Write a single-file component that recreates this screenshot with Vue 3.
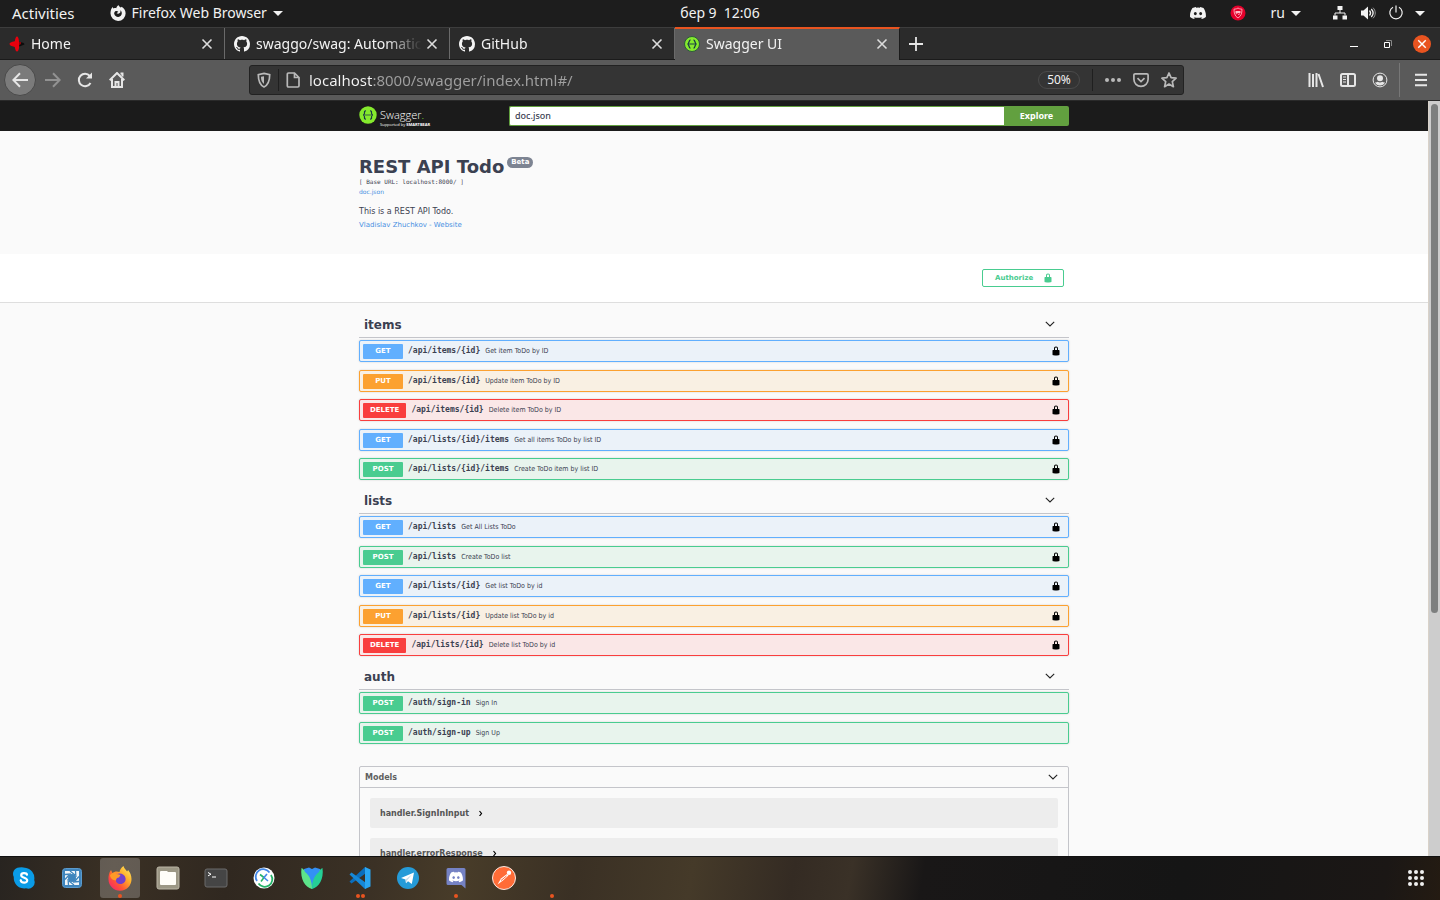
<script setup>
import { ref } from 'vue'

const tabs = [
  { title: 'Home', icon: 'home' },
  { title: 'swaggo/swag: Automatic', icon: 'github' },
  { title: 'GitHub', icon: 'github' },
  { title: 'Swagger UI', icon: 'swagger', active: true },
]

const spec = ref('doc.json')
const address = ref('localhost:8000/swagger/index.html#/')

const sections = [
  {
    name: 'items',
    ops: [
      { method: 'GET', path: '/api/items/{id}', summary: 'Get item ToDo by ID', lock: true },
      { method: 'PUT', path: '/api/items/{id}', summary: 'Update item ToDo by ID', lock: true },
      { method: 'DELETE', path: '/api/items/{id}', summary: 'Delete item ToDo by ID', lock: true },
      { method: 'GET', path: '/api/lists/{id}/items', summary: 'Get all items ToDo by list ID', lock: true },
      { method: 'POST', path: '/api/lists/{id}/items', summary: 'Create ToDo item by list ID', lock: true },
    ],
  },
  {
    name: 'lists',
    ops: [
      { method: 'GET', path: '/api/lists', summary: 'Get All Lists ToDo', lock: true },
      { method: 'POST', path: '/api/lists', summary: 'Create ToDo list', lock: true },
      { method: 'GET', path: '/api/lists/{id}', summary: 'Get list ToDo by id', lock: true },
      { method: 'PUT', path: '/api/lists/{id}', summary: 'Update list ToDo by id', lock: true },
      { method: 'DELETE', path: '/api/lists/{id}', summary: 'Delete list ToDo by id', lock: true },
    ],
  },
  {
    name: 'auth',
    ops: [
      { method: 'POST', path: '/auth/sign-in', summary: 'Sign In' },
      { method: 'POST', path: '/auth/sign-up', summary: 'Sign Up' },
    ],
  },
]

const models = ['handler.SignInInput', 'handler.errorResponse']

const dock = [
  { id: 'skype', label: 'Skype', dots: 0 },
  { id: 'shutter', label: 'Screenshot', dots: 0 },
  { id: 'firefox', label: 'Firefox', dots: 1, active: true },
  { id: 'files', label: 'Files', dots: 0 },
  { id: 'terminal', label: 'Terminal', dots: 0 },
  { id: 'remote', label: 'Remote desktop', dots: 0 },
  { id: 'tulip', label: 'Tulip', dots: 0 },
  { id: 'code', label: 'Code', dots: 2 },
  { id: 'telegram', label: 'Telegram', dots: 0 },
  { id: 'discord', label: 'Discord', dots: 1 },
  { id: 'postman', label: 'Postman', dots: 0 },
  { id: 'blank', label: 'Window', dots: 1 },
]
</script>

<template>
  <div class="desktop">
    <svg class="defs" aria-hidden="true">
      <symbol id="lock" viewBox="0 0 20 20">
        <path d="M15.8 8H14V5.6C14 2.7 12.7 1 10 1 7.200 1 6 2.700 6 5.600V8H4c-.55 0-1 .65-1 1.200V17c0 .55.47 1.170 1 1.340l1.200.36c.52.17 1.370.3 1.920.3h5.760c.55 0 1.400-.13 1.920-.31l1.190-.36c.53-.16 1-.78 1-1.330V9.200c0-.55-.64-1.200-1.190-1.200zM12 8H8V5.200C8 3.700 8.700 3 10 3s2 .7 2 2.200V8z" />
      </symbol>
      <symbol id="github" viewBox="0 0 16 16">
        <path d="M8 0C3.580 0 0 3.580 0 8c0 3.540 2.290 6.530 5.470 7.590.4.070.55-.17.55-.38 0-.19-.01-.82-.01-1.490-2.010.37-2.530-.49-2.690-.94-.09-.23-.48-.94-.82-1.130-.28-.15-.68-.52-.01-.53.63-.01 1.080.58 1.230.82.72 1.210 1.870.87 2.330.66.070-.52.28-.87.51-1.070-1.780-.2-3.640-.89-3.640-3.950 0-.87.31-1.590.82-2.150-.08-.2-.36-1.020.08-2.120 0 0 .67-.21 2.200.82.64-.18 1.320-.27 2-.27s1.360.09 2 .27c1.530-1.040 2.200-.82 2.200-.82.44 1.100.16 1.920.08 2.120.51.56.82 1.270.82 2.150 0 3.070-1.870 3.750-3.650 3.950.29.25.54.73.54 1.480 0 1.070-.01 1.930-.01 2.200 0 .21.15.46.55.38A8.010 8.010 0 0 0 16 8c0-4.420-3.580-8-8-8z" />
      </symbol>
      <symbol id="discordface" viewBox="0 0 24 24">
        <path d="M20.300 4.400A19.800 19.800 0 0 0 15.400 2.900l-.6 1.200a18.300 18.300 0 0 0-5.500 0L8.600 2.900a19.700 19.700 0 0 0-4.900 1.500C.5 9-.3 13.600.1 18.100a19.900 19.900 0 0 0 6 3l1.300-2-1.900-.9.400-.3c3.900 1.800 8.200 1.800 12.100 0l.4.300-1.900.9 1.300 2a19.800 19.800 0 0 0 6-3c.5-5.200-.8-9.700-3.500-13.700zM8 15.300c-1.200 0-2.200-1.100-2.200-2.400s1-2.400 2.200-2.400 2.200 1.100 2.200 2.400-1 2.400-2.200 2.400zm8 0c-1.200 0-2.200-1.100-2.200-2.400s1-2.400 2.200-2.400 2.200 1.100 2.200 2.400-1 2.400-2.200 2.400z" />
      </symbol>
      <symbol id="close" viewBox="0 0 12 12">
        <path d="M1.500 1.500l9 9M10.500 1.500l-9 9" fill="none" stroke="currentColor" stroke-width="1.600" />
      </symbol>
      <symbol id="chevron" viewBox="0 0 10 10">
        <path d="M.8 2.800L5 7l4.200-4.200" fill="none" stroke="currentColor" stroke-width="1.100" />
      </symbol>
      <symbol id="swag" viewBox="0 0 18 18">
        <circle cx="9" cy="9" r="8.700" fill="#85ea2d" />
        <path d="M7 4.800c-1.800 0-1.500 1-1.500 2.200S5.200 9 4 9c1.200 0 1.500.8 1.500 2s-.3 2.200 1.500 2.200M11 4.800c1.800 0 1.500 1 1.500 2.200s.3 2 1.500 2c-1.200 0-1.500.8-1.500 2s.3 2.200-1.500 2.200" fill="none" stroke="#173647" stroke-width="1.200" />
        <circle cx="7" cy="9" r=".7" fill="#173647" /><circle cx="9" cy="9" r=".7" fill="#173647" /><circle cx="11" cy="9" r=".7" fill="#173647" />
      </symbol>
    </svg>

    <header class="panel">
      <div class="panel-left">
        <button class="activities">Activities</button>
        <button class="appmenu">
          <svg width="16" height="16" viewBox="0 0 16 16" fill="#f2f2f2">
            <path fill-rule="evenodd" d="M8.500 0c.3 1.400 1.500 2 2.500 2.600l.6-.9c2.500 1.500 4 3.800 4 6.600A7.500 7.500 0 0 1 .5 8.500C.4 6 1 3.800 2.700 1.900c.2.700.5 1.200 1 1.500.8-.4 1.700-.4 2.600-.2C6.500 2 7.400.8 8.500 0zM5.200 6.300C4.300 7 4 8 4.300 9.100c.5 1.900 2.200 3 4.100 2.800 2-.2 3.400-1.800 3.400-3.700 0-1.300-.6-2.300-1.500-2.900.4 1.300.1 2.200-.6 2.800-.8.700-2.200.8-3.100.1l1.700-1.500c-.8-.8-1.900-.9-3.100-.4z" />
          </svg>
          <span>Firefox Web Browser</span><i class="caret"></i>
        </button>
      </div>
      <time class="clock">бер 9&nbsp; 12:06</time>
      <div class="panel-right">
        <svg class="tray-discord" width="16" height="16" fill="#f2f2f2"><use href="#discordface" /></svg>
        <svg class="tray-shield" width="16" height="16" viewBox="0 0 16 16"><circle cx="8" cy="8" r="7.500" fill="#e4002b" /><path d="M4 4.200c1.600 0 3-.4 4-1.200 1 .8 2.400 1.200 4 1.200 0 4-.8 6.800-4 8.800-3.200-2-4-4.800-4-8.800z" fill="none" stroke="#ff9cac" /><path d="M5.500 6h5v2h-5z" fill="#ffbac5" /><path d="M5.500 9l2-.7M8 9.500l2-.7" stroke="#ff9cac" /></svg>
        <button class="lang">ru<i class="caret"></i></button>
        <button class="system" aria-label="System menu">
          <svg width="16" height="16" viewBox="0 0 16 16" fill="#f2f2f2"><path d="M5.500 1h5v4h-5zM1 10.500h4.500v4H1zM10.500 10.500H15v4h-4.500z" /><path d="M8 5v3M3 10.500V8h10v2.500" fill="none" stroke="#f2f2f2" /></svg>
          <svg width="16" height="16" viewBox="0 0 16 16"><path d="M1 5.500h2.500L8 1.500v13l-4.500-4H1z" fill="#f2f2f2" /><path d="M9.500 5.500c1.300 1.500 1.300 3.500 0 5M11.300 4c2.200 2.400 2.200 5.600 0 8" fill="none" stroke="#f2f2f2" stroke-width="1.300" /><path d="M13 2.700c3 3 3 7.600 0 10.600" fill="none" stroke="#999" /></svg>
          <svg width="16" height="16" viewBox="0 0 16 16" fill="none" stroke="#f2f2f2" stroke-width="1.200"><path d="M5 2.300a6.200 6.200 0 1 0 6 0M8 .5v7" /></svg>
          <i class="caret"></i>
        </button>
      </div>
    </header>

    <div class="tabbar">
      <div v-for="t in tabs" :key="t.title" class="tab" :class="{ active: t.active }">
        <svg v-if="t.icon === 'home'" width="16" height="16" viewBox="0 0 16 16"><path d="M8.500 5.500L14 6.800q1.500.4 1.500 1.700L9 11z" fill="#0c0c0c" /><path d="M9 6h3v2l-3 2z" fill="#8d0008" /><path d="M8 .5q1.500 0 2 5L10 8l.2 3q-.7 4.500-2.200 4.500T5.800 11Q.5 9.800.5 8t5.300-2.700Q6.500.5 8 .5z" fill="#e8000d" /></svg>
        <svg v-else-if="t.icon === 'github'" width="16" height="16" fill="#f4f4f4"><use href="#github" /></svg>
        <svg v-else width="16" height="16" viewBox="0 0 16 16"><circle cx="8" cy="8" r="7.500" fill="#85ea2d" stroke="#2c5a3c" /><path d="M6.500 3.800C4.500 3.800 5.500 8 3.500 8c2 0 1 4.200 3 4.200M9.500 3.800c2 0 1 4.200 3 4.200-2 0-1 4.200-3 4.200" fill="none" stroke="#173647" stroke-width="1.300" /><path d="M5 8h6" stroke="#3d7a3c" stroke-width="1.500" /></svg>
        <button class="tab-title">{{ t.title }}</button>
        <button class="tab-close" aria-label="Close tab"><svg width="12" height="12"><use href="#close" /></svg></button>
      </div>
      <button class="newtab" aria-label="New tab"><svg width="14" height="14" viewBox="0 0 14 14"><path d="M7 0v14M0 7h14" stroke="#e6e6e6" stroke-width="1.800" /></svg></button>
      <div class="winctl">
        <button aria-label="Minimize"><svg width="8" height="10" viewBox="0 0 8 10"><path d="M0 7.500h8" stroke="#fff" /></svg></button>
        <button aria-label="Restore"><svg width="8" height="8" viewBox="0 0 8 8" fill="none"><path d="M.5 2.500h5v5h-5z" stroke="#fff" /><path d="M2 .5h5.500V6" stroke="#888" /></svg></button>
        <button class="quit" aria-label="Close"><svg width="10" height="10" viewBox="0 0 12 12"><path d="M1.500 1.500l9 9M10.500 1.500l-9 9" stroke="#fff" stroke-width="1.700" /></svg></button>
      </div>
    </div>

    <nav class="toolbar">
      <div class="nav-left">
        <button class="back" aria-label="Back"><svg width="16" height="16" viewBox="0 0 16 16"><path d="M16 8H1.500M8 1.300L1.300 8 8 14.700" /></svg></button>
        <button class="forward" aria-label="Forward"><svg width="16" height="16" viewBox="0 0 16 16"><path d="M0 8h14.500M8 1.300L14.700 8 8 14.700" /></svg></button>
        <button aria-label="Reload"><svg width="16" height="16" viewBox="0 0 16 16"><path d="M13.500 11A6.200 6.200 0 1 1 12.800 4" /><path d="M15 .5v6H9z" fill="#e6e6e6" stroke="none" /></svg></button>
        <button aria-label="Home"><svg width="16" height="16" viewBox="0 0 16 16"><path d="M.7 8.300L8 1l7.300 7.300M3 7v8h10V7" /><path d="M6.500 15v-5h3v5" /><path d="M11.500 1.500h2v3" /></svg></button>
      </div>
      <div class="urlbar">
        <svg width="16" height="16" viewBox="0 0 16 16"><path d="M8 1.300l5.700 1.400C13.700 8 13 12.500 8 14.900 3 12.500 2.300 8 2.300 2.700z" fill="none" stroke="#b9b9b9" stroke-width="1.700" /><path d="M8 4.200v7.800C5.700 10.200 5 8 5 4.800z" fill="#b9b9b9" /></svg>
        <i class="sep"></i>
        <svg width="16" height="16" viewBox="0 0 16 16" fill="none" stroke="#b9b9b9" stroke-width="1.600"><path d="M3.500 1h6L14 5.500v8.300q0 1.200-1.200 1.200H3.500q-1.200 0-1.200-1.200V2.200Q2.300 1 3.500 1zM9.500 1v4.500H14" /></svg>
        <input v-model="address" class="address" aria-label="Address" />
        <button class="zoom">50%</button>
        <i class="sep"></i>
        <button aria-label="Page actions"><svg width="16" height="16" viewBox="0 0 16 16" fill="#b9b9b9"><circle cx="2" cy="8" r="2" /><circle cx="8" cy="8" r="2" /><circle cx="14" cy="8" r="2" /></svg></button>
        <button aria-label="Pocket"><svg width="16" height="16" viewBox="0 0 16 16" fill="none" stroke="#b9b9b9" stroke-width="1.700"><path d="M2.200 1.800h11.600q1.300 0 1.300 1.300v4.200a7.100 7.100 0 0 1-14.200 0V3.100q0-1.300 1.300-1.300z" /><path d="M4.500 6.200L8 9.600l3.500-3.400" /></svg></button>
        <button aria-label="Bookmark"><svg width="16" height="16" viewBox="0 0 16 16" fill="none" stroke="#b9b9b9" stroke-width="1.600" stroke-linejoin="round"><path d="M8 1l2.100 4.700 5 .5-3.800 3.400 1.100 5.100L8 12.100l-4.400 2.600 1.100-5.100L.9 6.200l5-.5z" /></svg></button>
      </div>
      <div class="nav-right">
        <button aria-label="Library"><svg width="16" height="16" viewBox="0 0 16 16"><path d="M1.500 1v14M5 2v13M8.500 1v14M10.500 2l4.500 13" /></svg></button>
        <button aria-label="Sidebars"><svg width="16" height="16" viewBox="0 0 16 16"><path d="M2.500 2h11q1.500 0 1.500 1.500v9q0 1.500-1.500 1.500h-11Q1 14 1 12.500v-9Q1 2 2.500 2zM8 2v12" /><path d="M3 5h3M3 7.500h3M3 10h3" stroke-width="1" /></svg></button>
        <button aria-label="Account"><svg width="16" height="16" viewBox="0 0 16 16"><circle class="thin" cx="8" cy="8" r="6.900" /><circle cx="8" cy="6.200" r="3" fill="#e6e6e6" stroke="none" /><path d="M3 10.500q2 0 2.700-.7 2.300 1.600 4.600 0 .7.700 2.700.7Q11.500 13.500 8 13.500T3 10.500z" fill="#e6e6e6" stroke="none" /></svg></button>
        <i class="bar"></i>
        <button aria-label="Menu"><svg width="16" height="16" viewBox="0 0 16 16"><path d="M2 2.800h12M2 8h12M2 13.200h12" /></svg></button>
      </div>
    </nav>

    <div class="viewport">
      <main class="page">
        <div class="topbar">
          <div class="wrap topbar-row">
            <a class="logo" href="#" aria-label="Swagger, supported by SmartBear">
              <svg width="18" height="18"><use href="#swag" /></svg>
              <span class="logo-text"><b>Swagger<em>.</em></b><small>Supported by <strong>SMARTBEAR</strong></small></span>
            </a>
            <form class="loader" @submit.prevent>
              <input v-model="spec" aria-label="Definition address" />
              <button>Explore</button>
            </form>
          </div>
        </div>

        <section class="wrap info">
          <h1>REST API Todo<span class="badge">Beta</span></h1>
          <pre>[ Base URL: localhost:8000/ ]</pre>
          <a class="doc" href="#">doc.json</a>
          <p>This is a REST API Todo.</p>
          <a class="contact" href="#">Vladislav Zhuchkov - Website</a>
        </section>

        <div class="scheme">
          <div class="wrap scheme-row">
            <button class="authorize">Authorize<svg width="10" height="10"><use href="#lock" /></svg></button>
          </div>
        </div>

        <div class="wrap operations">
          <section v-for="s in sections" :key="s.name">
            <h2>{{ s.name }}<button :aria-label="'Toggle ' + s.name"><svg width="10" height="10"><use href="#chevron" /></svg></button></h2>
            <div class="ops">
              <div v-for="o in s.ops" :key="o.method + o.path" class="op" :class="o.method.toLowerCase()">
                <button class="op-main"><span class="method">{{ o.method }}</span><span class="path">{{ o.path }}</span><span class="summary">{{ o.summary }}</span></button>
                <button v-if="o.lock" class="lock" aria-label="Authorization"><svg width="10" height="10"><use href="#lock" /></svg></button>
              </div>
            </div>
          </section>

          <section class="models">
            <h3>Models<button aria-label="Toggle models"><svg width="10" height="10"><use href="#chevron" /></svg></button></h3>
            <div class="model-list">
              <button v-for="m in models" :key="m" class="model">{{ m }}<svg width="5" height="6" viewBox="0 0 5 6"><path d="M1.500 1L3.500 3.500 1.500 6" fill="none" stroke="#000" stroke-width="1.200" /></svg></button>
            </div>
          </section>
        </div>
      </main>
      <div class="scrollbar"><div class="thumb"></div></div>
    </div>

    <footer class="dock">
      <button v-for="d in dock" :key="d.id" class="app" :class="{ active: d.active }" :aria-label="d.label">
        <svg v-if="d.id === 'skype'" width="24" height="24" viewBox="0 0 24 24"><path d="M7 1.500a10.500 10.500 0 0 1 6 .2A10.500 10.500 0 0 1 22.200 14 6.400 6.400 0 0 1 14 22.300 10.500 10.500 0 0 1 1.800 11 6.400 6.400 0 0 1 7 1.500z" fill="#0a9be6" /><path d="M15 8.700C14.500 6.600 9.200 6.400 9.200 9.200S15.200 11.500 15.200 14.400c0 3-5.800 3-6.500-.2" fill="none" stroke="#fff" stroke-width="2.200" stroke-linecap="round" /></svg>
        <svg v-else-if="d.id === 'shutter'" width="24" height="24" viewBox="0 0 24 24"><rect x="2.500" y="2.500" width="19" height="19" rx="3" fill="#3f85bd" stroke="#5b9bcd" /><path d="M5 5h14v14H5z" fill="#f2f6f9" /><circle cx="12" cy="12" r="4" fill="#3f85bd" /><path d="M5 8.500l6-.5M10 5l5 4M15.500 5l.5 6M19 10.500L15 15M19 15.500l-6 .5M14 19l-5-4M8.500 19L8 13M5 13.500L9 9" stroke="#3f85bd" stroke-width="1.300" /></svg>
        <svg v-else-if="d.id === 'firefox'" width="26" height="26" viewBox="0 0 26 26">
          <defs><linearGradient id="fx" x1="1" y1="0" x2="0" y2="1"><stop offset="0" stop-color="#fff36b" /><stop offset=".35" stop-color="#ffb02b" /><stop offset=".65" stop-color="#ff5634" /><stop offset="1" stop-color="#f5157c" /></linearGradient></defs>
          <path d="M16.500 1c.5 2.300 2 3.400 3.600 5.500l1-1.500c2 2.500 3.400 5.400 3.400 9A11.500 11.500 0 0 1 1.500 14.500C1.300 11 2 7.500 4 5L5.500 8l3-1.500c1.500-.2 2.800 0 4 .6C13 4.700 14.200 2.600 16.500 1z" fill="url(#fx)" /><path d="M9.500 9.500C13 7.500 17.500 9 18.500 13c.7 3.500-2 6-5 6s-5-2-4.700-4.500z" fill="#7340c9" /><path d="M3 10c2-2 3.500-2.500 5.500-3l.5 2c1.500 0 3 .3 4.500 1L12 12.500c-2.200.2-3 1.500-3 3-3.500-.3-6-2.500-6-5.500z" fill="#ff9a26" />
        </svg>
        <svg v-else-if="d.id === 'files'" width="24" height="24" viewBox="0 0 24 24"><rect x="1" y="1" width="22" height="22" rx="2" fill="#9c9785" stroke="#bbb5a5" /><path d="M5 5h6l1 1h7q1 0 1 1v11q0 1-1 1H5q-1 0-1-1V6q0-1 1-1z" fill="#fffdf8" /></svg>
        <svg v-else-if="d.id === 'terminal'" width="24" height="24" viewBox="0 0 24 24"><rect x="1" y="3" width="22" height="18" rx="2" fill="#454545" stroke="#6b6b6b" /><path d="M4 6.500l3 1.700-3 1.700M8 11h4" fill="none" stroke="#fff" /></svg>
        <svg v-else-if="d.id === 'remote'" width="24" height="24" viewBox="0 0 24 24"><circle cx="12" cy="12" r="10.500" fill="#fff" /><path d="M5 15A7.500 7.500 0 0 1 17.500 6.500" fill="none" stroke="#4388e8" stroke-width="1.800" /><path d="M19 9A7.500 7.500 0 0 1 6.500 17.500" fill="none" stroke="#26b36a" stroke-width="1.800" /><path d="M8 8.500l4 3-3 4" fill="none" stroke="#26b36a" stroke-width="1.600" /><path d="M15 8l-3 3.500 4 3.500" fill="none" stroke="#4388e8" stroke-width="1.600" /></svg>
        <svg v-else-if="d.id === 'tulip'" width="24" height="24" viewBox="0 0 24 24"><path d="M4 3l5-1.500 3 1.500 3-1.500L20 3c1 8-3 15-8 20C7 18 3 11 4 3z" fill="#3390f5" /><path d="M12 23C5 21 0 13 1.500 2c2 1 3 2 3.500 4 4 3 7 8 7 17z" fill="#5de48a" /><path d="M12 23c0-9 3-14 7-17 .5-2 1.500-3 3.500-4C24 13 19 21 12 23z" fill="#25cf96" /></svg>
        <svg v-else-if="d.id === 'code'" width="24" height="24" viewBox="0 0 24 24"><path d="M17 1L1.500 15.500l2 2L21 5z" fill="#0a6ebd" /><path d="M17 23L1.500 8.500l2-2L21 19z" fill="#1688d8" /><path d="M17 1l5.500 2.500v17L17 23z" fill="#2aa6f2" /></svg>
        <svg v-else-if="d.id === 'telegram'" width="24" height="24" viewBox="0 0 24 24"><circle cx="12" cy="12" r="11" fill="#259bd8" /><path d="M5 12l13-5.500-2.200 11.500-3.800-2.800-2 2-.5-3.600z" fill="#fff" /><path d="M9.500 13.600l6.500-5-5 6-1 2.600z" fill="#c7dce9" /></svg>
        <svg v-else-if="d.id === 'discord'" width="24" height="24" viewBox="0 0 24 24"><path d="M4 2h16q1.500 0 1.500 1.500V22.500l-4-3.500H4q-1.500 0-1.500-1.500v-14Q2.500 2 4 2z" fill="#7582c4" /><svg x="5" y="4" width="14" height="14" fill="#fff"><use href="#discordface" /></svg></svg>
        <svg v-else-if="d.id === 'postman'" width="24" height="24" viewBox="0 0 24 24"><circle cx="12" cy="12" r="11.500" fill="#ff6c37" stroke="#f8e9e2" /><path d="M5.500 18.500l3.500-6 6-4.500 1.500 1.500-5.500 5z" fill="#fff" /><circle cx="17" cy="6.800" r="2.200" fill="#fff" /><path d="M9 14.500l5.500-4.500" stroke="#ff6c37" /></svg>
        <span class="dots"><i v-for="n in d.dots" :key="n"></i></span>
      </button>
      <button class="grid" aria-label="Show applications"><i v-for="n in 9" :key="n"></i></button>
    </footer>
  </div>
</template>

<style>
html, body { margin: 0; background: #1c1c1c; }
</style>

<style scoped>
* { box-sizing: border-box; }
button { border: 0; padding: 0; background: none; color: inherit; font: inherit; cursor: pointer; }
input { font: inherit; }
svg { display: block; flex: none; }
a { text-decoration: none; }
.defs { position: absolute; width: 0; height: 0; }
.desktop { display: flex; flex-direction: column; height: 100vh; overflow: hidden; font-family: "Noto Sans", sans-serif; font-size: 14px; color: #f2f2f2; }

.panel { display: grid; grid-template-columns: 1fr auto 1fr; align-items: center; height: 27px; padding-bottom: 1px; flex: none; background: #1d1d1d; line-height: 20px; }
.panel-left, .panel-right, .appmenu, .lang, .system { display: flex; align-items: center; }
.panel-left { padding-left: 12px; gap: 35px; }
.activities { font-size: 15px; }
.appmenu { gap: 6px; }
.caret { width: 0; height: 0; border: 5px solid transparent; border-top-color: #f2f2f2; border-bottom: 0; }
.panel-right { justify-content: flex-end; padding-right: 15px; }
.tray-discord { margin-right: 24px; }
.tray-shield { margin-right: 25px; }
.lang { gap: 6px; margin-right: 31px; }
.system { gap: 12px; }
.system .caret { margin-left: -1px; }

.tabbar { display: flex; align-items: stretch; height: 33px; flex: none; background: #2b2b2b; border-top: 1px solid #3d3d3d; border-bottom: 1px solid #1b1b1b; }
.tab { display: flex; align-items: center; flex: 0 1 225px; min-width: 0; padding: 0 11px 0 9px; border-right: 1px solid #6a6a6a; }
.tab.active { background: #5a5a5a; margin: -1px 0; border-top: 2px solid #e95420; border-right-color: #1b1b1b; padding-bottom: 2px; }
.tab-title { flex: 1; min-width: 0; margin: 0 4px 0 6px; text-align: left; white-space: nowrap; overflow: hidden; line-height: 20px; mask-image: linear-gradient(to right, #000 78%, transparent 100%); }
.tab-close { color: #dcdcdc; }
.newtab { padding: 0 9px; }
.winctl { margin-left: auto; display: flex; align-items: center; gap: 16px; padding-right: 9px; }
.winctl button { width: 18px; height: 18px; border-radius: 50%; display: grid; place-items: center; }
.winctl .quit { background: #e95420; }

.toolbar { display: flex; align-items: center; height: 41px; flex: none; background: #5a5a5a; border-bottom: 1px solid #2a2a2a; }
.toolbar svg { fill: none; stroke: #e6e6e6; stroke-width: 2; }
.toolbar .thin { stroke-width: 1px; }
.nav-left { display: flex; align-items: center; gap: 16px; width: 249px; padding-left: 4px; flex: none; }
.back { width: 32px; height: 32px; display: grid; place-items: center; border-radius: 50%; background: #7b7b7b; border: 1px solid #4a4a4a; margin-right: -7px; }
.forward { opacity: .4; }
.urlbar { flex: 1; min-width: 0; height: 30px; display: flex; align-items: center; background: #343434; border: 1px solid #222; border-radius: 3px; padding: 0 6px; }
.urlbar svg { stroke-width: 1.7px; stroke: #b9b9b9; }
.urlbar svg path[fill="#b9b9b9"], .urlbar svg[fill="#b9b9b9"] { fill: #b9b9b9; stroke: none; }
.urlbar .sep { width: 1px; height: 22px; background: #1f1f1f; margin: 0 6px; }
.urlbar button + button { margin-left: 12px; }
.address { flex: 1; min-width: 0; height: 26px; border: 0; outline: 0; padding: 0; margin-left: 8px; font-size: 15px; color: transparent; background: linear-gradient(to right, #f5f5f5 64px, #a0a0a0 64px); background-clip: text; -webkit-background-clip: text; }
.zoom { width: 42px; height: 18px; border: 1px solid #4a4a4a; border-radius: 9px; font-size: 12px; line-height: 16px; margin-right: 6px; }
.urlbar .zoom + .sep { margin-right: 12px; }
.nav-right { display: flex; align-items: center; gap: 16px; padding: 0 11px 0 124px; }
.nav-right svg [fill="#e6e6e6"] { fill: #e6e6e6; }
.bar { width: 1px; height: 34px; background: #777; margin: 0 -3px 0 -5px; }

.viewport { flex: 1; min-height: 0; display: flex; overflow: hidden; }
.page { flex: 1; min-width: 0; overflow: hidden; background: #fafafa; color: #3b4151; font-family: "DejaVu Sans", sans-serif; }
.scrollbar { width: 12px; background: #cdcdcd; border-left: 1px solid #d9d2c9; padding: 3px 2px; }
.thumb { height: 68%; border-radius: 4px; background: #7d7f7f; }
.wrap { width: 100%; max-width: 710px; margin: 0 auto; }

.topbar { background: #1b1b1b; padding: 5px 0; }
.topbar-row { display: flex; }
.logo { display: flex; gap: 3px; width: 150px; color: #fff; }
.logo-text { display: flex; flex-direction: column; }
.logo b { font: 300 11px/17px "Open Sans", sans-serif; }
.logo em { color: #85ea2d; font-style: normal; }
.logo small { font: 4px/3px "Open Sans", sans-serif; white-space: nowrap; }
.loader { flex: 1; display: flex; height: 20px; }
.loader input { flex: 1; min-width: 0; border: 1px solid #62a03f; border-right: 0; border-radius: 2px 0 0 2px; padding: 0 5px 2px; color: #3b4151; background: #fff; font: 500 9px "Noto Sans", sans-serif; outline: 0; }
.loader button { width: 65px; padding-bottom: 2px; border-radius: 0 2px 2px 0; background: #62a03f; color: #fff; font: 700 9px "Noto Sans", sans-serif; }

.info { height: 123px; padding-top: 25px; display: flex; flex-direction: column; align-items: flex-start; }
h1 { display: flex; align-items: flex-start; gap: 3px; margin: 0; font-size: 18px; line-height: 22px; }
.badge { margin-top: 1px; padding: 0 4px; height: 11px; border-radius: 6px; background: #7d8492; color: #fff; font-size: 7px; line-height: 11px; }
pre { margin: 0; font: 6px/8px "DejaVu Sans Mono", monospace; }
.doc { font-size: 6px; line-height: 8px; margin-top: 2px; color: #4990e2; }
.info p { margin: 10px 0 3px; font-size: 8px; line-height: 12px; }
.contact { font-size: 7px; line-height: 9px; color: #4990e2; }

.scheme { background: #fff; padding: 15px 0; border-bottom: 1px solid #dedede; }
.scheme-row { display: flex; justify-content: flex-end; padding-right: 5px; }
.authorize { display: flex; align-items: center; justify-content: space-between; width: 82px; height: 18px; padding: 0 10px 1px 12px; border: 1px solid #49cc90; border-radius: 2px; color: #49cc90; font-size: 7px; font-weight: 700; fill: #49cc90; }

.operations { padding-top: 1px; }
h2 { display: flex; align-items: center; justify-content: space-between; height: 34px; margin: 0; padding: 9px 14px 0 5px; border-bottom: 1px solid #c4c5ca; font-size: 12px; line-height: 24px; }
h2 button { padding-bottom: 2px; }
.ops { padding-top: 2px; }
.op { display: flex; align-items: center; height: 22px; margin-bottom: 8px; border: 1px solid; border-radius: 2px; padding: 0 7px 0 3px; box-shadow: 0 0 2px rgba(0, 0, 0, .19); }
.op:nth-child(even) { margin-bottom: 7px; }
.op:last-child { margin-bottom: 0; }
.op-main { flex: 1; display: flex; align-items: center; gap: 5px; text-align: left; }
.lock { padding-bottom: 1px; }
.method { min-width: 40px; height: 15px; padding: 0 7px; border-radius: 1px; color: #fff; text-align: center; font-size: 7px; line-height: 15px; font-weight: 700; }
.path { font: 700 8px/12px "DejaVu Sans Mono", monospace; }
.summary { font: 7px/12px "DejaVu Sans Condensed", "DejaVu Sans", sans-serif; }
.get { border-color: #61affe; background: #ebf2f9; }
.get .method { background: #61affe; }
.put { border-color: #fca130; background: #f9f0e3; }
.put .method { background: #fca130; }
.delete { border-color: #f93e3e; background: #fae7e7; }
.delete .method { background: #f93e3e; }
.post { border-color: #49cc90; background: #e8f4ed; }
.post .method { background: #49cc90; }

.models { margin-top: 22px; border: 1px solid #c4c5ca; border-radius: 2px; }
h3 { display: flex; align-items: center; justify-content: space-between; height: 21px; margin: 0; padding: 0 10px 0 5px; border-bottom: 1px solid #c4c5ca; font-size: 8px; color: #606060; }
h2 button, h3 button { color: #222; }
.model-list { display: grid; gap: 10px; padding: 10px; }
.model { display: flex; align-items: center; gap: 9px; height: 30px; padding: 0 10px; border-radius: 2px; background: #ededed; color: #555; font-size: 8px; font-weight: 700; }

.dock { display: flex; align-items: center; gap: 8px; height: 44px; flex: none; padding: 0 14px 1px 4px; border-top: 1px solid #111; background: linear-gradient(100deg, #282420 0%, #3a3024 8%, #302820 16%, #3b3125 26%, #483c29 32%, #3a3024 40%, #453a29 48%, #342b23 55%, #3a3127 59%, #191717 64%, #151515 82%, #1b1715 96%, #241b12 100%); }
.app { position: relative; width: 40px; height: 40px; border-radius: 3px; display: grid; place-items: center; }
.app.active { background: rgba(255, 255, 255, .22); }
.dots { position: absolute; left: 0; right: 0; bottom: 0; display: flex; justify-content: center; gap: 1px; }
.dots i { width: 4px; height: 4px; border-radius: 50%; background: #e95420; }
.grid { margin-left: auto; width: 20px; height: 20px; display: grid; grid-template-columns: repeat(3, 4px); gap: 2px; place-content: center; }
.grid i { width: 4px; height: 4px; border-radius: 50%; background: #f0f0f0; }
</style>
